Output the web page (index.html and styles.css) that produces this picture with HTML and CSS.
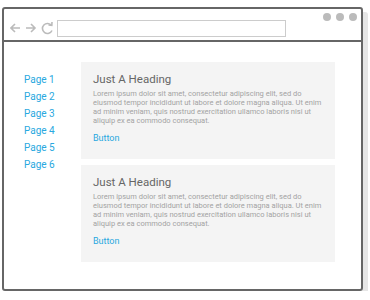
FILE: index.html
```html
<!DOCTYPE html>
<html lang="en">
<head>
    <meta charset="UTF-8">
    <meta name="viewport" content="width=device-width, initial-scale=1.0">
    <title>Wireframe</title>
    <link rel="stylesheet" href="styles.css">
</head>
<body>
    <div class="window">
        <div class="toolbar">
            <svg class="nav-icons" width="44" height="14" viewBox="0 0 44 14">
                <path d="M1 7 H10 M5 3 L1 7 L5 11" />
                <path d="M16 7 H25 M21 3 L25 7 L21 11" />
                <path d="M41.5 4.5 A5 5 0 1 0 42 9.5" />
                <path d="M38.5 4 L41.8 4.4 L42 1" />
            </svg>
            <div class="address"></div>
            <div class="dots">
                <span></span><span></span><span></span>
            </div>
        </div>

        <div class="content">
            <ul class="sidebar">
                <li><a href="#">Page 1</a></li>
                <li><a href="#">Page 2</a></li>
                <li><a href="#">Page 3</a></li>
                <li><a href="#">Page 4</a></li>
                <li><a href="#">Page 5</a></li>
                <li><a href="#">Page 6</a></li>
            </ul>

            <div class="cards">
                <div class="card">
                    <h2>Just A Heading</h2>
                    <p>Lorem ipsum dolor sit amet, consectetur adipiscing elit, sed do eiusmod tempor incididunt ut labore et dolore magna aliqua. Ut enim ad minim veniam, quis nostrud exercitation ullamco laboris nisi ut aliquip ex ea commodo consequat.</p>
                    <a class="card-btn" href="#">Button</a>
                </div>
                <div class="card">
                    <h2>Just A Heading</h2>
                    <p>Lorem ipsum dolor sit amet, consectetur adipiscing elit, sed do eiusmod tempor incididunt ut labore et dolore magna aliqua. Ut enim ad minim veniam, quis nostrud exercitation ullamco laboris nisi ut aliquip ex ea commodo consequat.</p>
                    <a class="card-btn" href="#">Button</a>
                </div>
            </div>
        </div>
    </div>
</body>
</html>
```

FILE: styles.css
```css
body {
    margin: 7px 0 0 2px;
    font-family: Roboto, "Liberation Sans", Arial, sans-serif;
    background: #fff;
}
.window {
    width: 361px;
    height: 284px;
    box-sizing: border-box;
    border: 2px solid #666;
    border-radius: 3px;
    box-shadow: 5px 5px 0 #e6e6e6;
    display: flex;
    flex-direction: column;
}
.toolbar {
    display: flex;
    align-items: flex-end;
    height: 33px;
    box-sizing: border-box;
    padding: 4px 4px 3px 4px;
    border-bottom: 2px solid #666;
}
.nav-icons {
    margin: 0 3px 0 2px;
    align-self: center;
    position: relative;
    top: 3px;
}
.nav-icons path {
    fill: none;
    stroke: #bbb;
    stroke-width: 1.6;
}
.address {
    width: 229px;
    height: 17px;
    box-sizing: border-box;
    border: 1px solid #ccc;
}
.dots {
    margin-left: auto;
    align-self: flex-start;
    display: flex;
    gap: 5px;
}
.dots span {
    width: 8px;
    height: 8px;
    border-radius: 50%;
    background: #bbb;
}
.content {
    display: grid;
    grid-template-columns: 57px 254px;
    padding: 20px 0 0 20px;
}
.sidebar {
    list-style: none;
    margin: 9px 0 0 0;
    padding: 0;
}
.sidebar li {
    font-size: 10px;
    line-height: 17px;
}
.sidebar a,
.card-btn {
    color: #29a8e0;
    text-decoration: none;
}
.cards {
    display: flex;
    flex-direction: column;
    gap: 6px;
}
.card {
    background: #f4f4f4;
    padding: 10px 12px 15px 12px;
}
.card h2 {
    margin: 0;
    font-size: 11.5px;
    line-height: 14px;
    font-weight: 400;
    color: #666;
}
.card p {
    margin: 3px 0 0 0;
    font-size: 7.5px;
    line-height: 9px;
    color: #a3a3a3;
}
.card-btn {
    display: block;
    margin-top: 8px;
    font-size: 9px;
    line-height: 11px;
}
```
